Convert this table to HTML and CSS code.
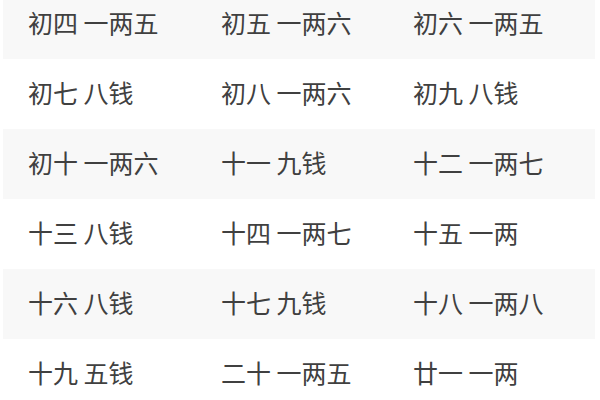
FILE: index.html
```html
<!DOCTYPE html>
<html lang="zh">
<head>
<meta charset="utf-8">
<link rel="stylesheet" href="styles.css">
</head>
<body>
<div class="table">
  <div class="row alt"><span>初四 一两五</span><span>初五 一两六</span><span>初六 一两五</span></div>
  <div class="row"><span>初七 八钱</span><span>初八 一两六</span><span>初九 八钱</span></div>
  <div class="row alt"><span>初十 一两六</span><span>十一 九钱</span><span>十二 一两七</span></div>
  <div class="row"><span>十三 八钱</span><span>十四 一两七</span><span>十五 一两</span></div>
  <div class="row alt"><span>十六 八钱</span><span>十七 九钱</span><span>十八 一两八</span></div>
  <div class="row"><span>十九 五钱</span><span>二十 一两五</span><span>廿一 一两</span></div>
</div>
</body>
</html>
```
FILE: styles.css
```css
html, body {
  margin: 0;
  padding: 0;
  background: #ffffff;
  overflow: hidden;
}
.table {
  margin: -11px 5px 0 3px;
  font-family: "Noto Sans CJK SC", "Noto Sans", sans-serif;
  font-size: 25px;
  color: #404040;
}
.row {
  display: grid;
  grid-template-columns: 193px 192px 1fr;
  align-items: center;
  height: 70px;
  padding-left: 25px;
  padding-bottom: 4px;
  box-sizing: border-box;
}
.row.alt {
  background: #f8f8f8;
}
.row span {
  white-space: nowrap;
}
```
